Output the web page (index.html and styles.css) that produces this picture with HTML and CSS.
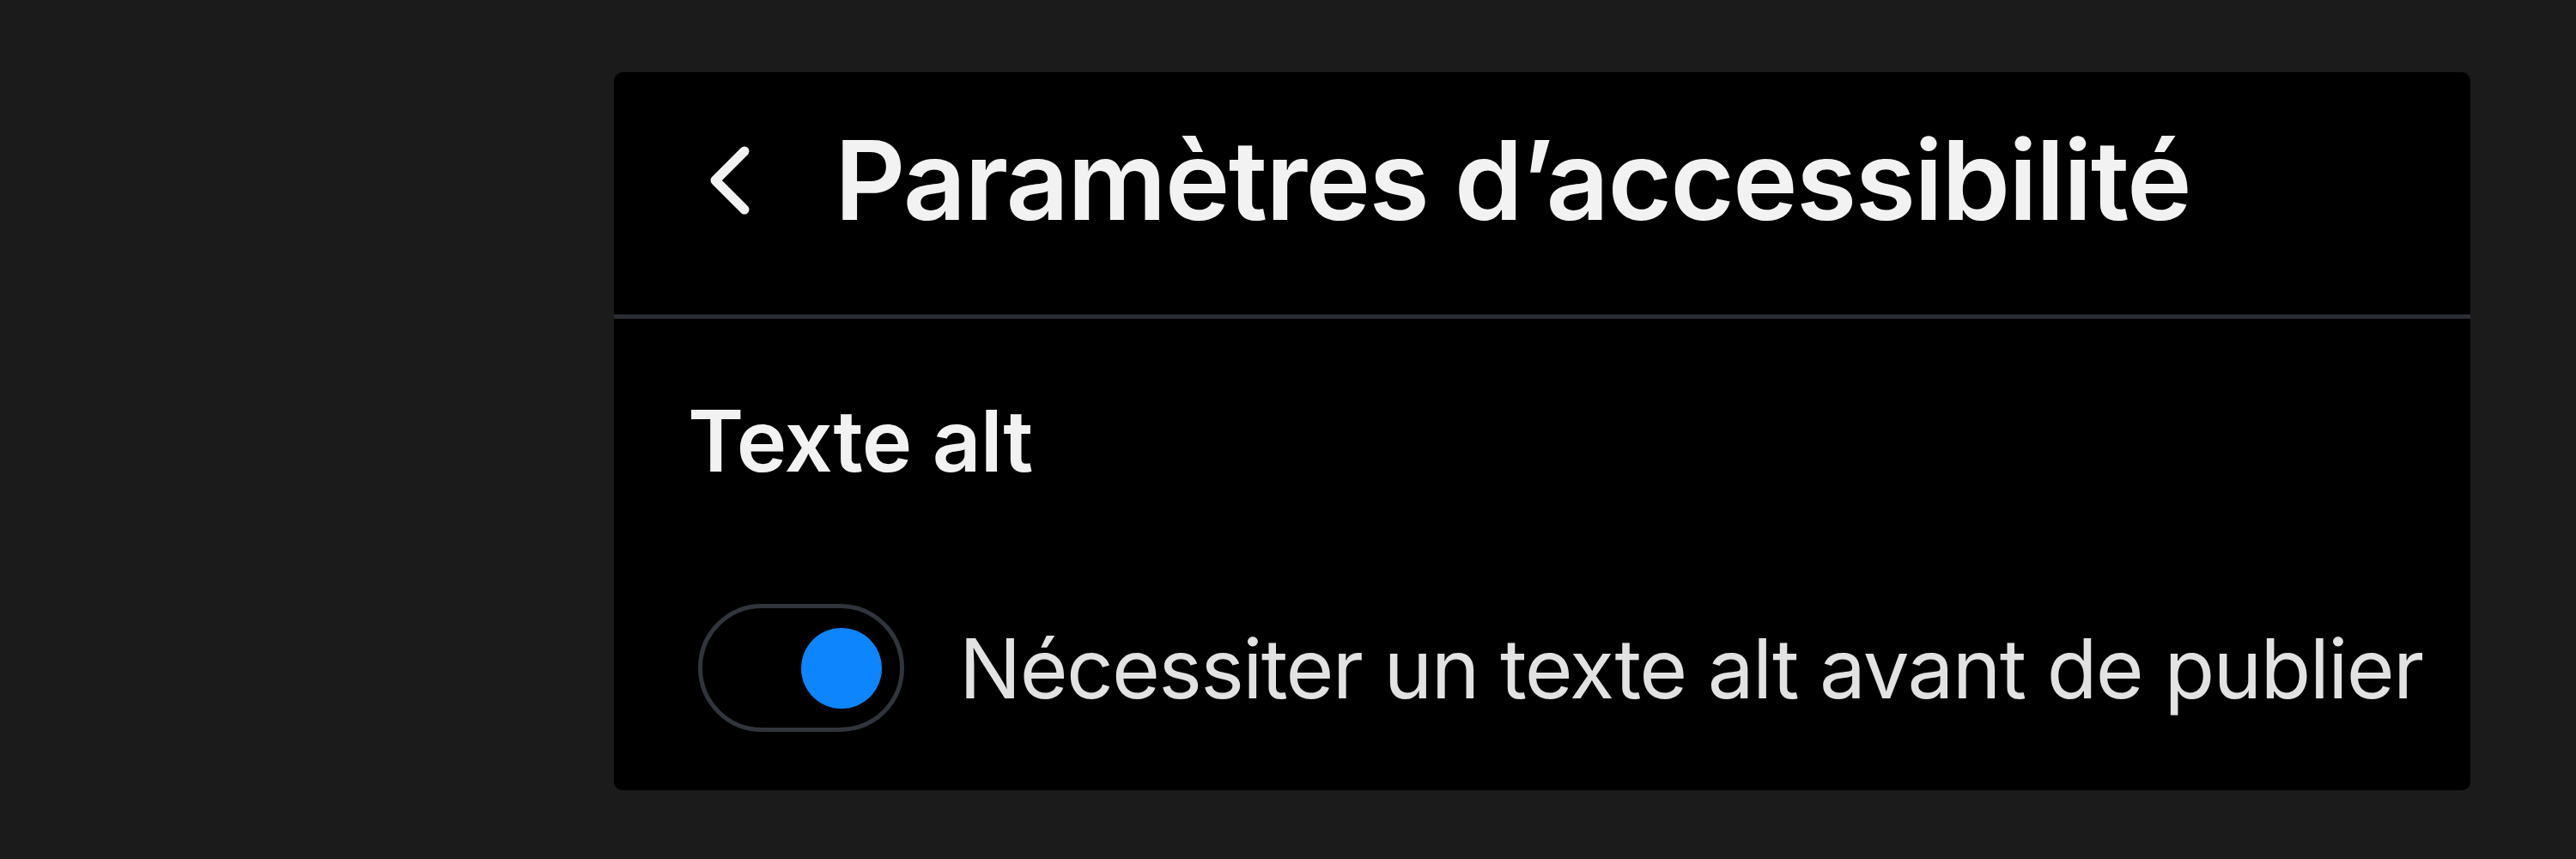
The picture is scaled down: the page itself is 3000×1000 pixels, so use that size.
FILE: index.html
```html
<!DOCTYPE html>
<html lang="fr">
<head>
    <meta charset="UTF-8">
    <meta name="viewport" content="width=device-width, initial-scale=1.0">
    <title>Paramètres d’accessibilité</title>
    <link rel="stylesheet" href="styles.css">
</head>
<body>

    <div class="panel">
        <!-- En-tête avec retour -->
        <div class="panel-header">
            <button class="back-button" aria-label="Retour">
                <svg width="48" height="80" viewBox="0 0 48 80">
                    <path d="M41 6 L7 40 L41 74" fill="none" stroke="#f2f2f2" stroke-width="11" stroke-linecap="round" stroke-linejoin="round"/>
                </svg>
            </button>
            <h1 class="panel-title">Paramètres d’accessibilité</h1>
        </div>

        <!-- Section texte alt -->
        <div class="panel-section">
            <h2 class="section-title">Texte alt</h2>
            <label class="toggle-row">
                <span class="toggle is-on"><span class="toggle-knob"></span></span>
                <span class="toggle-label">Nécessiter un texte alt avant de publier</span>
            </label>
        </div>
    </div>

</body>
</html>
```

FILE: styles.css
```css
body {
    font-family: Inter, "Noto Sans", sans-serif;
    margin: 0;
    padding: 0;
    background-color: #1b1b1b;
    color: #f2f2f2;
}

.panel {
    width: 2162px;
    height: 836px;
    margin: 84px 0 0 715px;
    background-color: #000;
    border-radius: 10px;
    box-sizing: border-box;
}

.panel-header {
    display: flex;
    align-items: center;
    height: 287px;
    padding: 0 0 31px 111px;
    box-sizing: border-box;
    border-bottom: 5px solid #2b2e35;
}

.back-button {
    display: flex;
    align-items: center;
    background: none;
    border: none;
    padding: 0;
    margin-right: 98px;
    cursor: pointer;
}

.panel-title {
    margin: 0;
    font-size: 128px;
    font-weight: 600;
    line-height: 1;
    letter-spacing: -1.7px;
}

.panel-section {
    padding: 93px 0 0 86px;
}

.section-title {
    margin: 0;
    font-size: 99px;
    font-weight: 600;
    line-height: 1;
    letter-spacing: -0.8px;
}

.toggle-row {
    display: flex;
    align-items: center;
    margin-top: 140px;
    margin-left: 12px;
    cursor: pointer;
}

.toggle {
    display: flex;
    align-items: center;
    flex-shrink: 0;
    width: 240px;
    height: 149px;
    padding: 0 21px;
    box-sizing: border-box;
    border: 5px solid #30353d;
    border-radius: 75px;
}

.toggle.is-on {
    justify-content: flex-end;
}

.toggle-knob {
    width: 94px;
    height: 94px;
    border-radius: 50%;
    background-color: #0d85fc;
}

.toggle-label {
    margin-left: 64px;
    font-size: 96px;
    font-weight: 400;
    line-height: 1;
    letter-spacing: -1.7px;
    white-space: nowrap;
    color: #e2e2e2;
}
```
